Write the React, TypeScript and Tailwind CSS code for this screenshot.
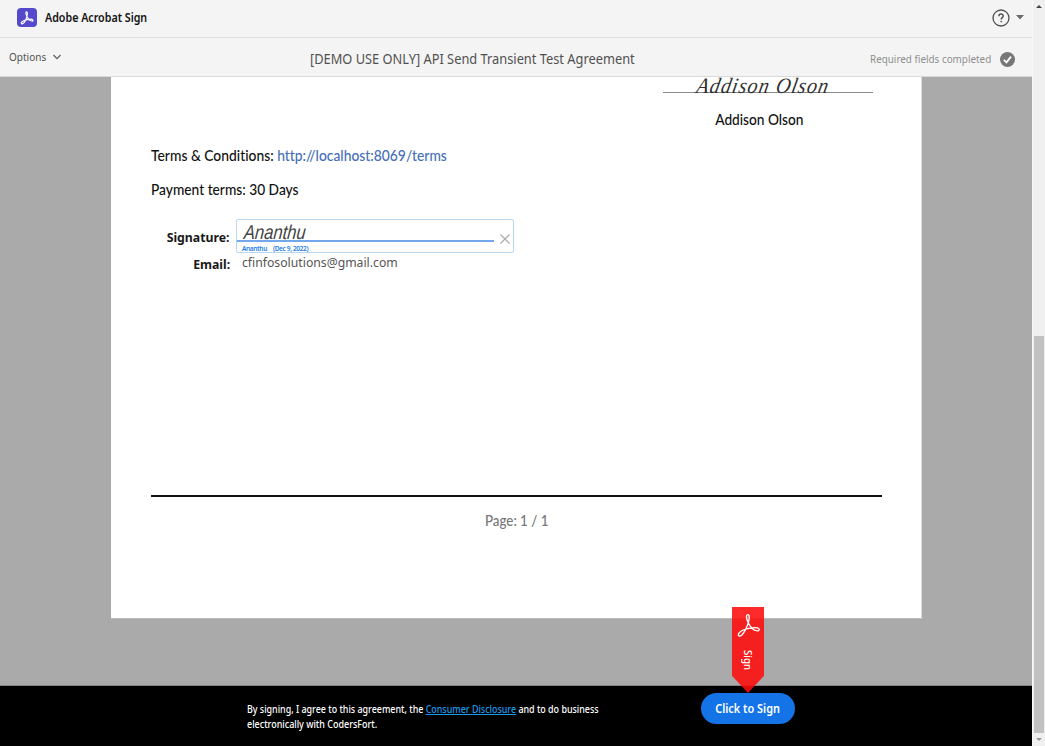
import type { ReactNode } from "react";

function AcrobatMark({ className, weight = 1.8 }: { className: string; weight?: number }) {
  return (
    <svg viewBox="0 0 24 24" className={className} fill="none" stroke="currentColor" strokeWidth={weight} strokeLinejoin="round">
      <path d="M11.2 1.6c-1.9.3-1.3 3.600.2 7 1.700 3.900 5.200 8 9 8.600 2.300.3 2.700-2.200.2-2.900-3.500-1-13.300 1-17 4.100-2.400 2-1.400 4.200.5 3.600 3-1 6.700-8.700 8-13.700.8-3.200 1-7-.9-6.700z" />
    </svg>
  );
}

function Header() {
  return (
    <header className="flex h-[38px] shrink-0 items-center border-b border-[#dedede] bg-[#f4f4f4] pb-[2px] pl-[17px] pr-[8px]">
      <div className="flex h-[19px] w-5 items-center justify-center rounded-[4px] bg-[#5448cd] text-white">
        <AcrobatMark className="h-[14px] w-[14px]" weight={2} />
      </div>
      <h1 className="ml-2 origin-left scale-x-[0.89] whitespace-nowrap text-[12px] font-semibold leading-4 text-[#111]">Adobe Acrobat Sign</h1>
      <div className="ml-auto flex items-center">
        <svg viewBox="0 0 18 18" className="h-[18px] w-[18px]" fill="none" stroke="#505050" strokeWidth="1.3">
          <circle cx="9" cy="9" r="8" />
          <path d="M6.900 7.200c0-2.900 4.300-2.800 4.300-.2 0 1.500-2 1.700-2 3.400" strokeWidth="1.5" />
          <circle cx="9.200" cy="12.600" r=".5" fill="#505050" strokeWidth=".8" />
        </svg>
        <svg viewBox="0 0 8 5" className="ml-[6px] h-[5px] w-2 fill-[#6b6b6b]">
          <path d="M0 0h8L4 4.500z" />
        </svg>
      </div>
    </header>
  );
}

function Toolbar() {
  return (
    <div className="grid h-[39px] shrink-0 grid-cols-[310px_1fr_175px] border-b border-[#dadada] bg-[#f4f4f4] text-[#505050]">
      <div className="flex h-[38px] items-center pl-[9px]">
        <span className="w-[44px] origin-left scale-x-[0.87] whitespace-nowrap text-[11.5px]">Options</span>
        <svg viewBox="0 0 8 6" className="h-[6px] w-2" fill="none" stroke="#606060" strokeWidth="1.3">
          <path d="M.5 1 4 4.600 7.500 1" />
        </svg>
      </div>
      <div className="flex h-[41px] items-center">
        <span className="origin-left scale-x-[0.916] whitespace-nowrap text-[14px]">[DEMO USE ONLY] API Send Transient Test Agreement</span>
      </div>
      <div className="flex h-[43px] items-center pl-[13px] text-[#8e8e8e]">
        <span className="-mt-px w-[130px] origin-left scale-x-[0.858] whitespace-nowrap text-[11.5px]">Required fields completed</span>
        <svg viewBox="0 0 15 15" className="h-[15px] w-[15px] shrink-0">
          <circle cx="7.500" cy="7.500" r="7.500" fill="#777" />
          <path d="M3.800 7.800 6.500 10.400 11 4.600" fill="none" stroke="#fff" strokeWidth="1.8" />
        </svg>
      </div>
    </div>
  );
}

function FieldLabel({ children }: { children: ReactNode }) {
  return (
    <div className="flex w-[79px] justify-end">
      <span className="origin-right scale-x-[0.945] whitespace-nowrap text-[13px] font-bold text-[#181818]">{children}</span>
    </div>
  );
}

function Agreement() {
  return (
    <article className="ml-[111px] flex h-[542px] w-[811px] flex-col border-b border-r border-b-[#bbb] border-r-[#ddd] bg-white pl-[40px] pr-[39px] font-[Lato,sans-serif] [font-variant-ligatures:none]">
      <div className="flex h-[16px] w-[210px] flex-col justify-end self-end border-b border-[#8b8b8b] mr-[9px]">
        <span className="ml-[34px] origin-left translate-y-px -skew-x-12 scale-x-[0.91] whitespace-nowrap font-['Liberation_Serif',serif] text-[22px] italic leading-[15px] tracking-[1.2px] text-[#303030]">Addison Olson</span>
      </div>
      <p className="mr-[9px] mt-[16px] flex w-[210px] justify-center self-end pr-[17px] text-[15px] font-medium leading-5 text-[#111]">
        <span className="scale-x-[0.913] whitespace-nowrap">Addison Olson</span>
      </p>
      <p className="mt-[16px] origin-left scale-x-[0.923] whitespace-nowrap text-[15px] font-medium leading-5 text-[#111]">
        Terms &amp; Conditions: <a href="#terms" className="text-[#456fb8]">http://localhost:8069/terms</a>
      </p>
      <p className="mt-[14px] origin-left scale-x-[0.917] text-[15px] font-medium leading-5 text-[#111]">Payment terms: 30 Days</p>
      <div className="mt-[20px] flex h-[34px] font-['Noto_Sans',sans-serif]">
        <div className="pt-[9px]"><FieldLabel>Signature:</FieldLabel></div>
        <div className="ml-[6px] flex w-[278px] rounded-[2px] border border-[#b9d8ef]">
          <div className="w-[257px]">
            <div className="flex h-[22px] items-end border-b-2 border-[#72a7ec] pl-[7px]">
              <span className="origin-left translate-y-[2px] -skew-x-6 scale-x-[0.83] whitespace-nowrap font-['Liberation_Sans',sans-serif] text-[20px] italic leading-[20px] text-[#444]">Ananthu</span>
            </div>
            <div className="flex gap-[6px] whitespace-nowrap pl-[5px] pt-[2px] text-[6.5px] font-semibold leading-[10px] tracking-[-0.35px] text-[#2680eb]">
              <span>Ananthu</span><span>(Dec 9, 2022)</span>
            </div>
          </div>
          <svg viewBox="0 0 10 10" className="ml-[6px] mt-[14px] h-[10px] w-[10px]" stroke="#aaa" strokeWidth="1.2">
            <path d="M.5.5l9 9M9.500.5l-9 9" />
          </svg>
        </div>
      </div>
      <div className="flex h-[20px] items-start font-['Noto_Sans',sans-serif]">
        <div className="pt-[2px]"><FieldLabel>Email:</FieldLabel></div>
        <span className="-mt-px ml-[12px] origin-left scale-x-[0.94] whitespace-nowrap text-[13px] leading-5 text-[#555]">cfinfosolutions@gmail.com</span>
      </div>
      <hr className="mt-[222px] border-t-2 border-[#111]" />
      <p className="mt-[13px] flex justify-center text-[15px] font-medium leading-5 text-[#777]">
        <span className="scale-x-[0.89] whitespace-nowrap">Page: 1 / 1</span>
      </p>
    </article>
  );
}

function Footer() {
  return (
    <footer className="flex h-[60px] shrink-0 bg-black pl-[247px] text-white">
      <p className="mt-[16px] w-[454px] whitespace-nowrap text-[10.5px] font-medium leading-[15px]">
        <span className="block origin-left scale-x-[0.849]">By signing, I agree to this agreement, the <a href="#disclosure" className="text-[#1b9bea] underline">Consumer Disclosure</a> and to do business</span>
        <span className="block origin-left scale-x-[0.855]">electronically with CodersFort.</span>
      </p>
      <div className="relative mt-[7px] h-[31px]">
        <button className="flex h-[31px] w-[94px] items-center justify-center rounded-full bg-[#1473e6]">
          <span className="scale-x-[0.84] whitespace-nowrap text-[13px] font-semibold">Click to Sign</span>
        </button>
        <div className="absolute bottom-[31px] left-[31px] flex h-[86px] w-[32px] flex-col items-center bg-[#ff0a0a]/87 pt-[6px] text-white [clip-path:polygon(0_0,100%_0,100%_80%,50%_100%,0_80%)]">
          <AcrobatMark className="h-[25px] w-[25px]" weight={1.3} />
          <span className="mt-[12px] text-[11.5px] font-medium leading-[14px] [writing-mode:vertical-rl]"><span className="block origin-top scale-y-[0.84]">Sign</span></span>
        </div>
      </div>
    </footer>
  );
}

function Scrollbar() {
  return (
    <div className="flex h-full w-[13px] flex-col items-center border-l border-[#f8f8f8] bg-[#f0f0f0]">
      <svg viewBox="0 0 6 3" className="mt-[5px] h-[3px] w-[6px] fill-[#444]"><path d="M0 3 3 0l3 3z" /></svg>
      <div className="mt-[328px] h-[397px] w-[10px] bg-[#c1c1c1]" />
      <svg viewBox="0 0 6 3" className="mt-[5px] h-[3px] w-[6px] fill-[#999]"><path d="M0 0h6L3 3z" /></svg>
    </div>
  );
}

export default function App() {
  return (
    <div className="flex h-[746px] w-[1045px] overflow-hidden font-['Noto_Sans',sans-serif]">
      <div className="flex w-[1032px] flex-col">
        <Header />
        <Toolbar />
        <main className="h-[609px] shrink-0 overflow-hidden border-b border-[#858585] bg-[#aaa]"><Agreement /></main>
        <Footer />
      </div>
      <Scrollbar />
    </div>
  );
}
